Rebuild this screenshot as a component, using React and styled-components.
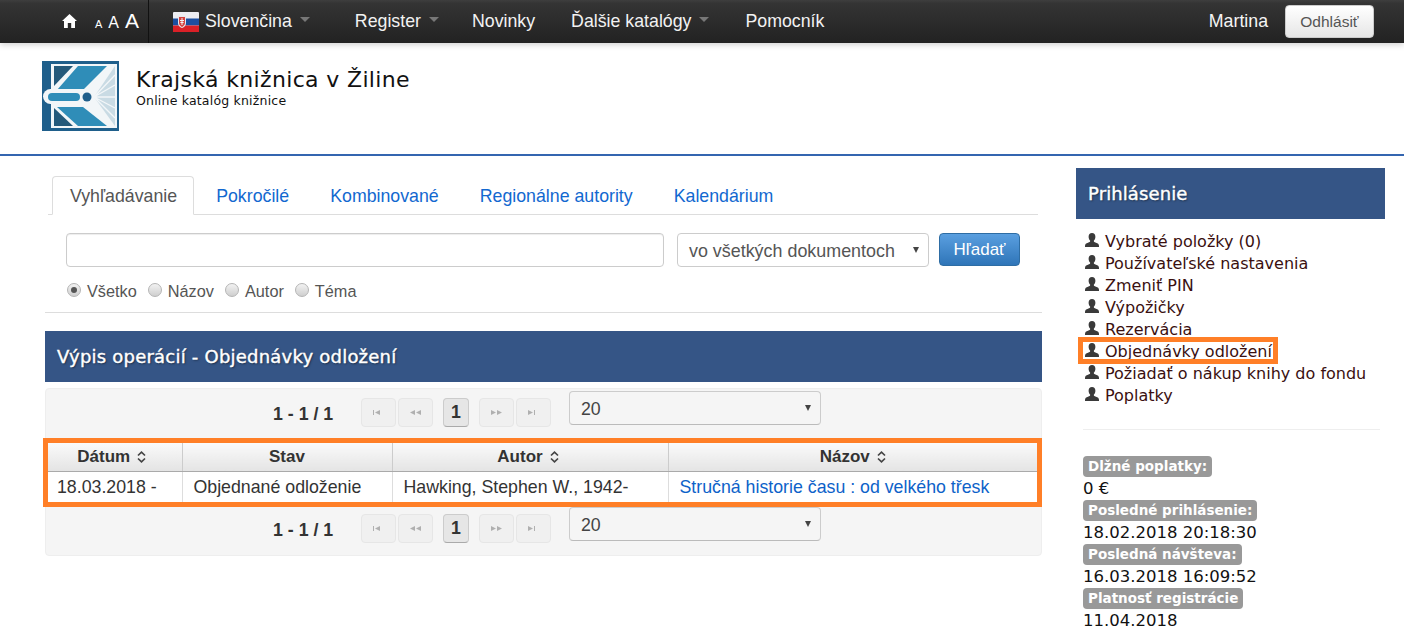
import styled, { createGlobalStyle } from "styled-components";

const GlobalStyle = createGlobalStyle`
html, body { margin: 0; padding: 0; background: #fff; }
body { font-family: "Liberation Sans", Arial, sans-serif; font-size: 17.75px; color: #333; }
* { box-sizing: border-box; }
`;

const MENU = [
  { text: "Vybraté položky (0)" },
  { text: "Používateľské nastavenia" },
  { text: "Zmeniť PIN" },
  { text: "Výpožičky" },
  { text: "Rezervácia" },
  { text: "Objednávky odložení", marked: true },
  { text: "Požiadať o nákup knihy do fondu" },
  { text: "Poplatky" },
];

const STATS = [
  ["Dlžné poplatky:", "0 €"],
  ["Posledné prihlásenie:", "18.02.2018 20:18:30"],
  ["Posledná návšteva:", "16.03.2018 16:09:52"],
  ["Platnosť registrácie", "11.04.2018"],
];

function HomeIcon() {
  return (
    <svg width="15" height="14" viewBox="0 0 15 14">
      <path d="M7.5 0 L15 7 L13 7 L13 14 L9.2 14 L9.2 9 L5.8 9 L5.8 14 L2 14 L2 7 L0 7 Z" fill="#fff" />
    </svg>
  );
}

function Flag() {
  return (
    <svg width="26" height="20" viewBox="0 0 26 20">
      <rect width="26" height="20" rx="1" fill="#ededf2" />
      <rect y="6.5" width="26" height="7" fill="#1c4fa0" />
      <rect y="13.5" width="26" height="6.5" fill="#d92027" />
      <path d="M5 4 H13 V11 C13 14 10.5 15.5 9 16 C7.5 15.5 5 14 5 11 Z" fill="#e8e8ee" />
      <path d="M6 5 H12 V11 C12 13 10 14.5 9 15 C8 14.5 6 13 6 11 Z" fill="#d5413f" />
      <path d="M8.5 6 H9.5 V8 H11 V9 H9.5 V10 H10.6 V11 H9.5 V13 H8.5 V11 H7.4 V10 H8.5 V9 H7 V8 H8.5 Z" fill="#f3f3f3" />
    </svg>
  );
}

function Logo() {
  return (
    <svg width="77" height="70" viewBox="0 0 77 70">
      <rect width="77" height="70" fill="#1f5f8b" />
      <rect x="9" y="3" width="66" height="64" fill="#f2f6f8" />
      <path d="M52 36 L73 5 L73 65 Z" fill="#c9dbe4" />
      <path d="M52 36 L73 14 M52 36 L73 24 M52 36 L73 36 M52 36 L73 47 M52 36 L73 57" stroke="#f2f6f8" strokeWidth="1.4" />
      <path d="M36 5 H65 L41 29 H15 Z" fill="#2f8db8" />
      <path d="M12 5 H31 L12 25 Z" fill="#24597a" />
      <path d="M15 46 H41 L65 65 H36 Z" fill="#2f8db8" />
      <path d="M12 47 L31 65 H12 Z" fill="#24597a" />
      <rect x="1" y="28" width="50" height="15" rx="7.5" fill="#f2f6f8" />
      <rect x="6" y="32" width="32" height="8" rx="4" fill="#2f8db8" />
      <circle cx="45" cy="36" r="4.5" fill="#1f5f8b" />
    </svg>
  );
}

function PersonIcon() {
  return (
    <svg width="14" height="14" viewBox="0 0 14 14">
      <path
        d="M7 0 C9.2 0 10.4 1.6 10.4 3.8 C10.4 5.6 9.6 7 8.8 7.8 C8.8 8.8 9.4 9.2 11 9.8 C12.8 10.5 14 11 14 13 L14 14 L0 14 L0 13 C0 11 1.2 10.5 3 9.8 C4.6 9.2 5.2 8.8 5.2 7.8 C4.4 7 3.6 5.6 3.6 3.8 C3.6 1.6 4.8 0 7 0 Z"
        fill="#3a3a3a"
      />
    </svg>
  );
}

function SortIcon() {
  return (
    <SortMark width="9" height="12" viewBox="0 0 9 12">
      <path d="M1 4.5 L4.5 1.2 L8 4.5 M1 7.5 L4.5 10.8 L8 7.5" fill="none" stroke="#444" strokeWidth="1.7" />
    </SortMark>
  );
}

function PagerGlyph({ kind }) {
  const paths = {
    first: "M2 1 H3 V6 H2 Z M9 1 V6 L4 3.5 Z",
    prev: "M7 1 V6 L2 3.5 Z M13 1 V6 L8 3.5 Z",
    next: "M2 1 V6 L7 3.5 Z M8 1 V6 L13 3.5 Z",
    last: "M2 1 V6 L7 3.5 Z M8 1 H9 V6 H8 Z",
  };
  return (
    <svg width="15" height="7" viewBox="0 0 15 7">
      <path d={paths[kind]} fill="#b0b0b0" />
    </svg>
  );
}

function Pager() {
  return (
    <PagerRow>
      <PagerCount>1 - 1 / 1</PagerCount>
      <PagerGroup>
        <PagerButton><PagerGlyph kind="first" /></PagerButton>
        <PagerButton><PagerGlyph kind="prev" /></PagerButton>
      </PagerGroup>
      <PagerCurrent>1</PagerCurrent>
      <PagerGroup>
        <PagerButton><PagerGlyph kind="next" /></PagerButton>
        <PagerButton><PagerGlyph kind="last" /></PagerButton>
      </PagerGroup>
      <PageSize>
        20
        <SelectCaret />
      </PageSize>
    </PagerRow>
  );
}

export default function App() {
  return (
    <>
      <GlobalStyle />
      <NavBar>
        <HomeLink><HomeIcon /></HomeLink>
        <FontSizes>
          <FontSize $size={11}>A</FontSize>
          <FontSize $size={16}>A</FontSize>
          <FontSize $size={21}>A</FontSize>
        </FontSizes>
        <NavDivider />
        <LangItem>
          <Flag />
          <span>Slovenčina</span>
          <NavCaret $gap={2} />
        </LangItem>
        <NavItem $left={45}>Register<NavCaret /></NavItem>
        <NavItem $left={33}>Novinky</NavItem>
        <NavItem $left={36}>Ďalšie katalógy<NavCaret /></NavItem>
        <NavItem $left={36}>Pomocník</NavItem>
        <NavRight>
          <UserName>Martina</UserName>
          <LogoutButton>Odhlásiť</LogoutButton>
        </NavRight>
      </NavBar>

      <Header>
        <Logo />
        <HeaderText>
          <SiteTitle>Krajská knižnica v Žiline</SiteTitle>
          <SiteSub>Online katalóg knižnice</SiteSub>
        </HeaderText>
      </Header>

      <Page>
        <MainColumn>
          <Tabs>
            <Tab $active>Vyhľadávanie</Tab>
            <Tab>Pokročilé</Tab>
            <Tab>Kombinované</Tab>
            <Tab>Regionálne autority</Tab>
            <Tab>Kalendárium</Tab>
          </Tabs>
          <SearchRow>
            <SearchInput type="text" />
            <ScopeSelect>
              vo všetkých dokumentoch
              <SelectCaret />
            </ScopeSelect>
            <SearchButton>Hľadať</SearchButton>
          </SearchRow>
          <RadioRow>
            <RadioItem><Radio $checked />Všetko</RadioItem>
            <RadioItem><Radio />Názov</RadioItem>
            <RadioItem><Radio />Autor</RadioItem>
            <RadioItem><Radio />Téma</RadioItem>
          </RadioRow>
          <MainRule />
          <BlueBar>Výpis operácií - Objednávky odložení</BlueBar>
          <Well>
            <Pager />
            <TableFrame>
              <ResultTable>
                <colgroup>
                  <col width="134" />
                  <col width="210" />
                  <col width="276" />
                  <col />
                </colgroup>
                <thead>
                  <tr>
                    <HeadCell $shift={6}>Dátum<SortIcon /></HeadCell>
                    <HeadCell>Stav</HeadCell>
                    <HeadCell $shift={4}>Autor<SortIcon /></HeadCell>
                    <HeadCell>Názov<SortIcon /></HeadCell>
                  </tr>
                </thead>
                <tbody>
                  <tr>
                    <BodyCell>18.03.2018 -</BodyCell>
                    <BodyCell>Objednané odloženie</BodyCell>
                    <BodyCell>Hawking, Stephen W., 1942-</BodyCell>
                    <BodyCell><TitleLink>Stručná historie času : od velkého třesk</TitleLink></BodyCell>
                  </tr>
                </tbody>
              </ResultTable>
            </TableFrame>
            <Pager />
          </Well>
        </MainColumn>

        <Sidebar>
          <SideHeading>Prihlásenie</SideHeading>
          <SideMenu>
            {MENU.map((item) => (
              <SideItem key={item.text} $marked={item.marked}>
                <PersonIcon />
                <span>{item.text}</span>
              </SideItem>
            ))}
          </SideMenu>
          <SideRule />
          <Stats>
            {STATS.map(([label, value]) => (
              <StatRow key={label}>
                <StatLabel>{label}</StatLabel>
                <StatValue>{value}</StatValue>
              </StatRow>
            ))}
          </Stats>
        </Sidebar>
      </Page>
    </>
  );
}

const NavBar = styled.div`
display: flex;
align-items: center;
height: 43px;
padding-left: 62px;
padding-right: 30px;
background: linear-gradient(#3e3e3e 0, #343434 8%, #222 100%);
box-shadow: 0 2px 6px rgba(0,0,0,0.18);
color: #fff;`

const HomeLink = styled.div`
display: flex;
width: 33px;
margin-top: -1px;`

const FontSizes = styled.div`
display: flex;
align-items: baseline;
gap: 6px;
width: 53px;
height: 100%;
padding-top: 9px;`

const FontSize = styled.span`
font-size: ${(p) => p.$size}px;
line-height: 24px;`

const NavDivider = styled.div`
width: 1px;
height: 100%;
background: #111;`

const LangItem = styled.div`
display: flex;
align-items: center;
gap: 6px;
margin-left: 24px;
color: #f2f2f2;`

const NavItem = styled.div`
display: flex;
align-items: center;
margin-left: ${(p) => p.$left}px;
color: #f2f2f2;`

const NavCaret = styled.i`
display: inline-block;
width: 0;
height: 0;
margin-left: ${(p) => p.$gap ?? 8}px;
margin-top: -5px;
border-left: 5px solid transparent;
border-right: 5px solid transparent;
border-top: 5px solid #777;`

const NavRight = styled.div`
display: flex;
align-items: center;
gap: 17px;
margin-left: auto;`

const UserName = styled.span`
color: #f5f5f5;`

const LogoutButton = styled.button`
width: 89px;
height: 33px;
padding: 0;
border: 1px solid #ccc;
border-radius: 4px;
background: linear-gradient(#fff, #e6e6e6);
font-family: inherit;
font-size: 15.5px;
color: #555;`

const Header = styled.div`
display: flex;
align-items: flex-start;
height: 113px;
padding: 18px 0 0 42px;
border-bottom: 2px solid #3465b0;`

const HeaderText = styled.div`
margin-left: 17px;
margin-top: 6px;
font-family: "DejaVu Sans", Verdana, sans-serif;
color: #111;`

const SiteTitle = styled.div`
font-size: 22px;
line-height: 26px;
letter-spacing: 0.35px;`

const SiteSub = styled.div`
font-size: 12.5px;
line-height: 16px;
letter-spacing: 0.2px;`

const Page = styled.div`
display: flex;
align-items: flex-start;
padding: 12px 0 0 45px;`

const MainColumn = styled.div`
width: 997px;`

const Tabs = styled.div`
display: flex;
align-items: flex-end;
height: 47px;
margin: 0 4px 0 3px;
padding-left: 4px;
border-bottom: 1px solid #ddd;`

const Tab = styled.div`
display: flex;
align-items: center;
height: ${(p) => (p.$active ? 39 : 38)}px;
padding: 1px ${(p) => (p.$active ? 16 : 18)}px 0 ${(p) => (p.$active ? 17 : 18)}px;
margin-right: 3px;
margin-bottom: -1px;
border: 1px solid ${(p) => (p.$active ? "#ddd" : "transparent")};
border-bottom-color: ${(p) => (p.$active ? "#fff" : "transparent")};
border-radius: 4px 4px 0 0;
background: ${(p) => (p.$active ? "#fff" : "transparent")};
color: ${(p) => (p.$active ? "#555" : "#1268d0")};`

const SearchRow = styled.div`
display: flex;
align-items: flex-start;
margin-top: 18px;
padding-left: 21px;`

const SearchInput = styled.input`
width: 598px;
height: 34px;
border: 1px solid #ccc;
border-radius: 4px;
box-shadow: inset 0 1px 1px rgba(0,0,0,0.075);`

const ScopeSelect = styled.div`
position: relative;
width: 252px;
height: 34px;
margin-left: 13px;
padding-left: 11px;
border: 1px solid #ccc;
border-radius: 4px;
background: #fff;
font-size: 17.9px;
line-height: 35px;
color: #555;`

const SelectCaret = styled.i`
position: absolute;
right: 9px;
top: 13px;
width: 0;
height: 0;
border-left: 3.5px solid transparent;
border-right: 3.5px solid transparent;
border-top: 6px solid #444;`

const SearchButton = styled.button`
width: 81px;
height: 33px;
margin-left: 10px;
padding: 0;
border: 1px solid #2e6da4;
border-radius: 4px;
background: linear-gradient(#5a9fe0, #2f75b8);
font-family: inherit;
font-size: 17px;
color: #fff;`

const RadioRow = styled.div`
display: flex;
align-items: center;
gap: 11px;
margin-top: 14px;
padding-left: 22px;
height: 20px;`

const RadioItem = styled.label`
display: flex;
align-items: center;
gap: 6px;
font-size: 16.3px;
color: #555;`

const Radio = styled.span`
display: inline-flex;
align-items: center;
justify-content: center;
width: 14px;
height: 14px;
margin-top: -3px;
border: 1px solid #b5b5b5;
border-radius: 50%;
background: linear-gradient(#f2f2f2, #cfcfcf);
&::after {
  content: "";
  display: ${(p) => (p.$checked ? "block" : "none")};
  width: 6px;
  height: 6px;
  border-radius: 50%;
  background: #555;
}`

const MainRule = styled.div`
height: 1px;
margin-top: 11px;
background: #ddd;`

const BlueBar = styled.div`
display: flex;
align-items: center;
height: 51px;
margin-top: 18px;
padding-left: 12px;
background: #355586;
font-family: "DejaVu Sans", Verdana, sans-serif;
font-size: 18px;
letter-spacing: 0.22px;
color: #fff;
-webkit-text-stroke: 0.4px #fff;
text-shadow: 1px 1px 2px rgba(0,0,0,0.5);`

const Well = styled.div`
margin-top: 6px;
height: 168px;
padding-top: 2px;
border: 1px solid #eee;
border-radius: 4px;
background: #f5f5f5;`

const PagerRow = styled.div`
display: flex;
align-items: flex-start;
height: 34px;
padding-left: 227px;`

const PagerCount = styled.div`
width: 88px;
padding-top: 11px;
font-weight: 600;
line-height: 24px;
color: #333;`

const PagerGroup = styled.div`
display: flex;
gap: 2px;
margin-top: 7px;`

const PagerButton = styled.div`
display: flex;
align-items: center;
justify-content: center;
width: 35px;
height: 29px;
border: 1px solid #e6e6e6;
border-radius: 4px;
background: #f0f0f0;`

const PagerCurrent = styled.div`
display: flex;
align-items: center;
justify-content: center;
width: 26px;
height: 29px;
margin: 7px 10px 0;
border: 1px solid #ccc;
border-bottom-color: #aaa;
border-radius: 4px;
background: #e6e6e6;
font-weight: 700;
color: #333;`

const PageSize = styled.div`
position: relative;
width: 252px;
height: 34px;
margin-left: 18px;
padding-left: 11px;
border: 1px solid #ccc;
border-bottom-color: #bbb;
border-radius: 4px;
background: #f5f5f5;
line-height: 35px;
color: #444;`

const TableFrame = styled.div`
width: 999px;
margin: 13px 0 0 -3px;
border: 5px solid #ff7f27;
background: #fff;`

const ResultTable = styled.table`
width: 100%;
table-layout: fixed;
border-collapse: collapse;`

const HeadCell = styled.th`
height: 28px;
padding: 0 ${(p) => p.$shift || 0}px 0 0;
border-left: 1px solid #ccc;
border-bottom: 1px solid #aaa;
background: linear-gradient(#fafafa, #e4e4e4);
font-size: 17px;
font-weight: 700;
color: #333;
&:first-child { border-left: none; }`

const SortMark = styled.svg`
margin-left: 7px;
vertical-align: -1px;`

const BodyCell = styled.td`
height: 31px;
padding: 2px 11px 0;
border-left: 1px solid #ddd;
white-space: nowrap;
overflow: hidden;
color: #333;
&:first-child { border-left: none; padding-left: 9px; }`

const TitleLink = styled.span`
color: #0d62c9;`

const Sidebar = styled.div`
width: 309px;
margin-left: 34px;`

const SideHeading = styled.div`
display: flex;
align-items: center;
height: 51px;
padding-left: 12px;
background: #355586;
font-family: "DejaVu Sans", Verdana, sans-serif;
font-size: 18px;
letter-spacing: 0.1px;
color: #fff;
-webkit-text-stroke: 0.4px #fff;
text-shadow: 1px 1px 2px rgba(0,0,0,0.5);`

const SideMenu = styled.div`
margin-top: 11px;
padding-left: 9px;`

const SideItem = styled.div`
position: relative;
display: flex;
align-items: center;
gap: 6px;
height: 22px;
width: fit-content;
font-family: "DejaVu Sans", Verdana, sans-serif;
font-size: 16px;
color: #3a1010;
svg { margin-top: -3px; }
&::after {
  content: "";
  display: ${(p) => (p.$marked ? "block" : "none")};
  position: absolute;
  left: -7px;
  right: -6px;
  top: -3px;
  bottom: -2px;
  border: 5px solid #ff7f27;
}`

const SideRule = styled.div`
height: 1px;
margin: 23px 5px 0 7px;
background: #eee;`

const Stats = styled.div`
margin-top: 26px;
padding-left: 7px;`

const StatRow = styled.div`
font-family: "DejaVu Sans", Verdana, sans-serif;`

const StatLabel = styled.div`
display: inline-block;
vertical-align: top;
height: 21px;
padding: 0 5px;
border-radius: 4px;
background: #999;
font-size: 13.5px;
font-weight: 700;
line-height: 21px;
color: #fff;`

const StatValue = styled.div`
font-size: 16.5px;
line-height: 23px;
color: #111;`
